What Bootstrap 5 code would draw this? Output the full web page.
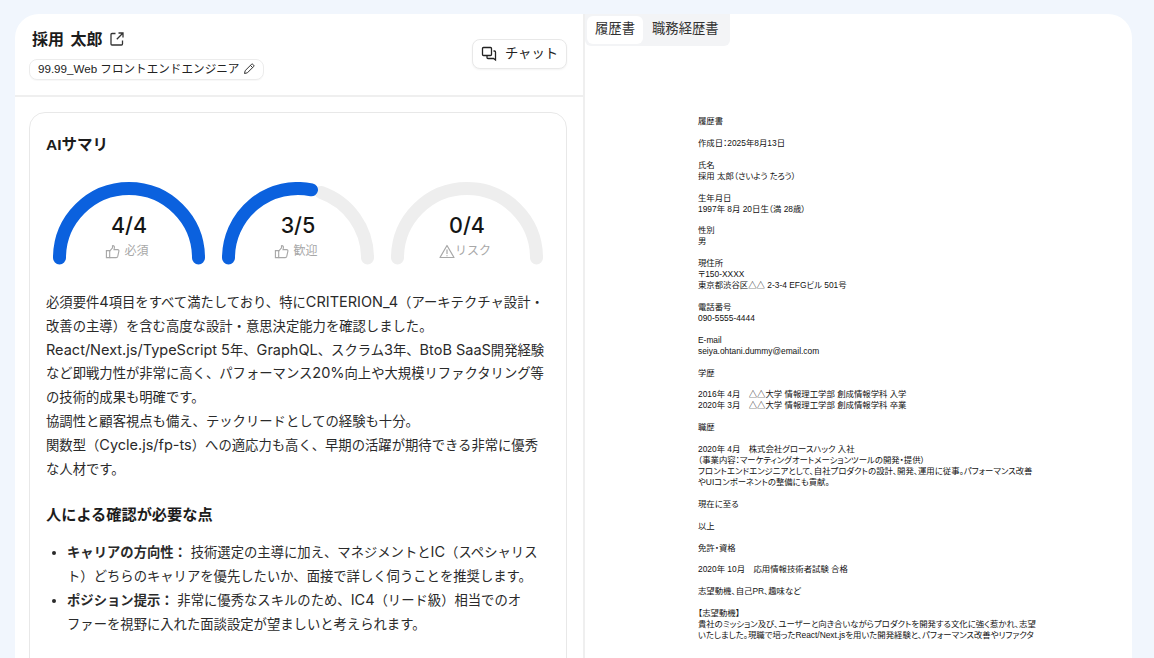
<!DOCTYPE html>
<html lang="ja">
<head>
    <meta charset="UTF-8">
    <title>採用 太郎</title>
    <link href="https://cdn.jsdelivr.net/npm/bootstrap@5.3.0/dist/css/bootstrap.min.css" rel="stylesheet">
    <style>
        html, body { height: 100%; overflow: hidden; }
        body {
            background: #f1f6fd;
            font-family: "Liberation Sans", "Noto Sans CJK JP", sans-serif;
            color: #1c1c1c;
        }
        .page-wrap { height: 658px; padding: 14px 22px 0 15px; }
        .main-panel {
            height: 100%;
            background: #fff;
            border-radius: 24px 24px 0 0;
            overflow: hidden;
        }
        .left-pane { width: 570px; flex: none; border-right: 2px solid #efefef; overflow: hidden; }
        .right-pane { flex: 1; position: relative; min-width: 0; }
        .cand-head { height: 83px; padding: 0 16px 2px 14px; border-bottom: 2px solid #efefef; }
        .cand-name { font-size: 16px; font-weight: 700; line-height: 24px; word-spacing: 2px; margin: 1px 0 0 3px; }
        .job-pill {
            height: 21px; padding: 0 8px 0 8px; margin-top: 7px;
            border: 1px solid #ececec; border-radius: 8px;
            font-size: 11.6px; color: #222; background: #fff;
            box-shadow: 0 1px 1px rgba(0,0,0,.03);
        }
        .chat-btn {
            height: 30px; width: 95px; padding: 0;
            border: 1px solid #e8e8e8; border-radius: 8px;
            font-size: 13.33px; color: #222; background: #fff;
            box-shadow: 0 1px 2px rgba(0,0,0,.05);
        }
        .summary-box {
            margin: 15px 16px 0 14px; padding: 19px 16px 0;
            border: 1px solid #e8e8e8; border-radius: 16px 16px 0 0;
            height: 600px;
        }
        .summary-title { font-size: 15.5px; font-weight: 700; line-height: 26px; margin: 0; }
        .gauge-row { margin: 24px 8px 26px 7px; gap: 17px; }
        .gauge-item { position: relative; width: 152px; height: 83px; }
        .gauge-item svg.arc { display: block; }
        .gauge-label { position: absolute; left: 0; right: 0; top: 29px; text-align: center; }
        .gauge-num { font-family: Inter, "Liberation Sans", sans-serif; font-size: 21.5px; line-height: 28px; font-weight: 500; color: #151515; }
        .gauge-sub { font-size: 12px; line-height: 18px; color: #a8a8a8; margin-top: 3px; padding-right: 4px; }
        .ai-text, .review-list { font-family: Inter, "Noto Sans CJK JP", sans-serif; }
        .ai-text { font-size: 13.33px; line-height: 23.8px; color: #2a2a2a; margin: 0; max-width: 501px; }
        .lat { font-size: 14.5px; line-height: 1; }
        .review-title { font-size: 15.2px; font-weight: 700; line-height: 24px; margin: 22px 0 14px; }
        .review-list { font-size: 13.33px; line-height: 23.8px; padding-left: 21px; margin: 0; color: #2a2a2a; max-width: 498px; }
        .doc-tabs {
            position: absolute; left: 0; top: 0;
            background: #f3f4f6; padding: 2px; border-radius: 0 0 6px 6px;
        }
        .doc-tab { font-size: 13.33px; line-height: 26px; height: 28px; padding: 0 8px; color: #333; border-radius: 6px; }
        .doc-tab-on { background: #fff; }
        .doc-tab + .doc-tab { padding: 0 9px; }
        .resume-text {
            position: absolute; left: 113px; top: 102px; width: 340px;
            font-size: 8.4px; line-height: 10.94px; color: #111;
            font-feature-settings: "palt";
        }
        .resume-text p { margin: 0 0 10.94px; }
    </style>
</head>
<body>
    <div class="page-wrap">
        <div class="main-panel d-flex">
            <div class="left-pane">
                <div class="cand-head d-flex justify-content-between align-items-center">
                    <div>
                        <div class="d-flex align-items-center gap-2">
                            <h1 class="cand-name">採用 太郎</h1>
                            <svg width="14" height="14" viewBox="0 0 14 14" fill="none" stroke="#333" stroke-width="1.3"><path d="M5.500 1.500H2a1 1 0 0 0-1 1V12a1 1 0 0 0 1 1h9.500a1 1 0 0 0 1-1V8.500"/><path d="M8.500 1h4.500v4.500M13 1 6.800 7.200"/></svg>
                        </div>
                        <div class="job-pill d-inline-flex align-items-center gap-1">
                            99.99_Web フロントエンドエンジニア
                            <svg width="12" height="12" viewBox="0 0 12 12" fill="none" stroke="#333" stroke-width="1"><path d="M1.500 10.500 2.200 7.600 8.300 1.500a1.200 1.200 0 0 1 1.800 0l.4.4a1.200 1.200 0 0 1 0 1.800L4.400 9.800Z"/><path d="M7.400 2.400l2.200 2.200"/></svg>
                        </div>
                    </div>
                    <button type="button" class="btn chat-btn d-flex align-items-center justify-content-center gap-2">
                        <svg width="16" height="16" viewBox="0 0 16 16" fill="none" stroke="#222" stroke-width="1.300"><path d="M2.500 1.500h7a1 1 0 0 1 1 1v6a1 1 0 0 1-1 1H2.500a1 1 0 0 1-1-1v-6a1 1 0 0 1 1-1Z"/><path d="M12.500 5h1a1 1 0 0 1 1 1v8L12.500 12.500H7a1 1 0 0 1-1-1v-2"/></svg>
                        チャット
                    </button>
                </div>
                <div class="summary-box">
                    <h2 class="summary-title">AIサマリ</h2>
                    <div class="gauge-row d-flex">
                        <div class="gauge-item">
                            <svg class="arc" width="152" height="83" viewBox="0 0 152 83" fill="none" stroke-width="13" stroke-linecap="round"><path d="M6.500 76A69.500 69.500 0 0 1 145.500 76" stroke="#0b61de"/></svg>
                            <div class="gauge-label">
                                <div class="gauge-num">4/4</div>
                                <div class="gauge-sub d-flex justify-content-center align-items-center gap-1">
                                    <svg width="15" height="15" viewBox="0 0 16 16" fill="none" stroke="#a8a8a8" stroke-width="1.200"><path d="M5 7v7.500H1.500V7Z"/><path d="M5 7.500 8 4V1.800c1.500-.3 2.300.8 2 2.200L9.600 6H13.500c1 0 1.500.8 1.300 1.700l-1.200 5.500c-.2.800-.8 1.300-1.600 1.300H5"/></svg>
                                    必須
                                </div>
                            </div>
                        </div>
                        <div class="gauge-item">
                            <svg class="arc" width="152" height="83" viewBox="0 0 152 83" fill="none" stroke-width="13" stroke-linecap="round"><path d="M99 10.400A69.500 69.500 0 0 1 145.500 76" stroke="#eeeeee"/><path d="M6.500 76A69.500 69.500 0 0 1 89.500 7.800" stroke="#0b61de"/></svg>
                            <div class="gauge-label">
                                <div class="gauge-num">3/5</div>
                                <div class="gauge-sub d-flex justify-content-center align-items-center gap-1">
                                    <svg width="15" height="15" viewBox="0 0 16 16" fill="none" stroke="#a8a8a8" stroke-width="1.200"><path d="M5 7v7.500H1.500V7Z"/><path d="M5 7.500 8 4V1.800c1.500-.3 2.300.8 2 2.200L9.600 6H13.500c1 0 1.500.8 1.300 1.700l-1.200 5.500c-.2.800-.8 1.300-1.600 1.300H5"/></svg>
                                    歓迎
                                </div>
                            </div>
                        </div>
                        <div class="gauge-item">
                            <svg class="arc" width="152" height="83" viewBox="0 0 152 83" fill="none" stroke-width="13" stroke-linecap="round"><path d="M6.500 76A69.500 69.500 0 0 1 145.500 76" stroke="#eeeeee"/></svg>
                            <div class="gauge-label">
                                <div class="gauge-num">0/4</div>
                                <div class="gauge-sub d-flex justify-content-center align-items-center">
                                    <svg width="16" height="15" viewBox="0 0 16 15" fill="none" stroke="#a8a8a8" stroke-width="1.200" stroke-linejoin="round"><path d="M8 1.500 15 13.500H1Z"/><path d="M8 5.500V10M8 11.200v1"/></svg>
                                    リスク
                                </div>
                            </div>
                        </div>
                    </div>
                    <p class="ai-text">必須要件<span class="lat">4</span>項目をすべて満たしており、特に<span class="lat">CRITERION_4</span>（アーキテクチャ設計・改善の主導）を含む高度な設計・意思決定能力を確認しました。<br><span class="lat">React/Next.js/TypeScript 5</span>年、<span class="lat">GraphQL</span>、スクラム<span class="lat">3</span>年、<span class="lat">BtoB SaaS</span>開発経験など即戦力性が非常に高く、パフォーマンス<span class="lat">20%</span>向上や大規模リファクタリング等の技術的成果も明確です。<br>協調性と顧客視点も備え、テックリードとしての経験も十分。<br>関数型（<span class="lat">Cycle.js/fp-ts</span>）への適応力も高く、早期の活躍が期待できる非常に優秀な人材です。</p>
                    <h3 class="review-title">人による確認が必要な点</h3>
                    <ul class="review-list">
                        <li><strong>キャリアの方向性：</strong> 技術選定の主導に加え、マネジメントと<span class="lat">IC</span>（スペシャリスト）どちらのキャリアを優先したいか、面接で詳しく伺うことを推奨します。</li>
                        <li><strong>ポジション提示：</strong> 非常に優秀なスキルのため、<span class="lat">IC4</span>（リード級）相当でのオ<br>ファーを視野に入れた面談設定が望ましいと考えられます。</li>
                    </ul>
                </div>
            </div>
            <div class="right-pane">
                <div class="doc-tabs d-flex">
                    <div class="doc-tab doc-tab-on">履歴書</div>
                    <div class="doc-tab">職務経歴書</div>
                </div>
                <div class="resume-text">
                    <p>履歴書</p>
                    <p>作成日：2025年8月13日</p>
                    <p>氏名<br>採用 太郎（さいよう たろう）</p>
                    <p>生年月日<br>1997年 8月 20日生（満 28歳）</p>
                    <p>性別<br>男</p>
                    <p>現住所<br>〒150-XXXX<br>東京都渋谷区△△ 2-3-4 EFGビル 501号</p>
                    <p>電話番号<br>090-5555-4444</p>
                    <p>E-mail<br>seiya.ohtani.dummy@email.com</p>
                    <p>学歴</p>
                    <p>2016年 4月　△△大学 情報理工学部 創成情報学科 入学<br>2020年 3月　△△大学 情報理工学部 創成情報学科 卒業</p>
                    <p>職歴</p>
                    <p>2020年 4月　株式会社グロースハック 入社<br>（事業内容：マーケティングオートメーションツールの開発・提供）<br>フロントエンドエンジニアとして、自社プロダクトの設計、開発、運用に従事。パフォーマンス改善やUIコンポーネントの整備にも貢献。</p>
                    <p>現在に至る</p>
                    <p>以上</p>
                    <p>免許・資格</p>
                    <p>2020年 10月　応用情報技術者試験 合格</p>
                    <p>志望動機、自己PR、趣味など</p>
                    <p>【志望動機】<br>貴社のミッション及び、ユーザーと向き合いながらプロダクトを開発する文化に強く惹かれ、志望いたしました。現職で培ったReact/Next.jsを用いた開発経験と、パフォーマンス改善やリファクタ</p>
                </div>
            </div>
        </div>
    </div>
    <script src="https://cdn.jsdelivr.net/npm/bootstrap@5.3.0/dist/js/bootstrap.bundle.min.js"></script>
</body>
</html>
